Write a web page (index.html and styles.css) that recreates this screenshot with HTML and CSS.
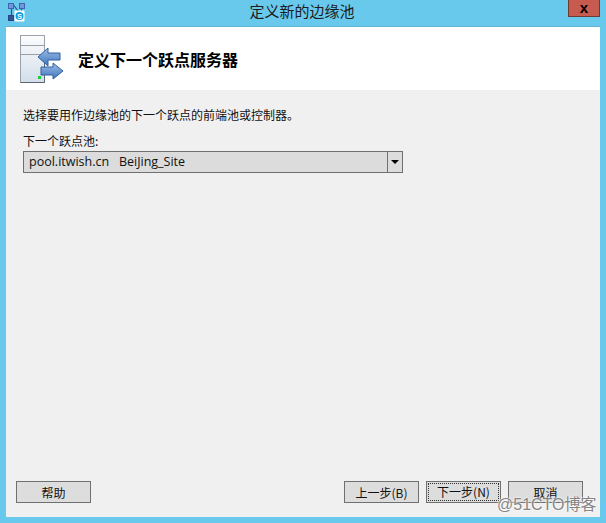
FILE: index.html
```html
<!DOCTYPE html>
<html lang="zh-CN">
<head>
  <meta charset="UTF-8" />
  <meta name="viewport" content="width=device-width, initial-scale=1.0"/>
  <title>定义新的边缘池</title>
  <link rel="stylesheet" href="styles.css">
</head>
<body>
  <div class="window">
    <div class="titlebar">
      <div class="app-icon">
        <svg width="17" height="19" viewBox="0 0 17 19">
          <path d="M3.5 4V14M13.5 4V9M6 2.5L10 8" stroke="#2f5597" stroke-width="1.2" fill="none"/>
          <rect x="0.5" y="0.5" width="5" height="5" fill="#6f97dc" stroke="#3d64ac"/>
          <rect x="11.5" y="0.5" width="5" height="5" fill="#6f97dc" stroke="#3d64ac"/>
          <rect x="0.5" y="12.5" width="5" height="5" fill="#2f5597" stroke="#27477f"/>
          <rect x="6.5" y="7.5" width="10" height="11" rx="1" fill="#ffffff"/>
          <circle cx="11.5" cy="13" r="4" fill="#10a0e0"/>
          <text x="11.5" y="15.6" class="skype-s">S</text>
        </svg>
      </div>
      <div class="title">定义新的边缘池</div>
      <div class="close-wrap"><div class="close">x</div></div>
    </div>

    <div class="dialog">
      <div class="header">
        <svg class="header-icon" width="46" height="50" viewBox="0 0 46 50">
          <defs>
            <linearGradient id="serverFill" x1="0" y1="0" x2="0" y2="1">
              <stop offset="0" stop-color="#fbfcfd"/>
              <stop offset="1" stop-color="#d3deea"/>
            </linearGradient>
            <linearGradient id="arrowFill" x1="0" y1="0" x2="0" y2="1">
              <stop offset="0" stop-color="#9dbde6"/>
              <stop offset="1" stop-color="#3f76bf"/>
            </linearGradient>
          </defs>
          <rect x="0.5" y="0.5" width="24" height="47" fill="url(#serverFill)" stroke="#9aa1a8"/>
          <path d="M1 10.5H24M1 19.5H24" stroke="#9aa1a8" fill="none"/>
          <path d="M0.5 47.5H24.5V20" stroke="#5d6670" fill="none"/>
          <rect x="18" y="41" width="3" height="3" fill="#1fce3c"/>
          <path d="M18 22L28 13V18H40V25H28V31Z" fill="url(#arrowFill)" stroke="#2f5f9f"/>
          <path d="M21 32H33V28L43 36L33 44V40H21Z" fill="url(#arrowFill)" stroke="#2f5f9f"/>
        </svg>
        <h1>定义下一个跃点服务器</h1>
      </div>

      <div class="content">
        <p class="intro">选择要用作边缘池的下一个跃点的前端池或控制器。</p>
        <label class="field-label">下一个跃点池:</label>
        <div class="combo">
          <span class="combo-value">pool.itwish.cn&nbsp;&nbsp;&nbsp;BeiJing_Site</span>
          <span class="combo-arrow"></span>
        </div>
      </div>

      <div class="footer">
        <button class="btn">帮助</button>
        <div class="btn-group">
          <button class="btn">上一步(B)</button>
          <button class="btn btn-focus"><span>下一步(N)</span></button>
          <button class="btn">取消</button>
        </div>
      </div>
    </div>
  </div>

  <div class="watermark">@51CTO博客</div>
</body>
</html>
```

FILE: styles.css
```css
html, body {
  margin: 0;
  padding: 0;
}

body {
  width: 606px;
  height: 523px;
  overflow: hidden;
  position: relative;
  background: #69c9ec;
  font-family: "Open Sans", "Noto Sans CJK SC", sans-serif;
  font-size: 12px;
  color: #111;
}

.window {
  height: 517px;
  padding: 0 6px;
  display: flex;
  flex-direction: column;
}

.titlebar {
  height: 26px;
  flex: none;
  display: grid;
  grid-template-columns: 1fr auto 1fr;
  border-bottom: 1px solid #62b3d2;
}

.app-icon {
  padding-top: 3px;
  margin-left: 2px;
}

.skype-s {
  font-family: "Liberation Sans", sans-serif;
  font-size: 7px;
  font-weight: bold;
  fill: #ffffff;
  text-anchor: middle;
}

.title {
  font-family: "Noto Sans CJK SC", sans-serif;
  font-size: 15px;
  line-height: 22px;
  margin-left: -2px;
  color: #1c1c1c;
}

.close-wrap {
  display: flex;
  justify-content: flex-end;
}

.close {
  width: 32px;
  height: 17px;
  box-sizing: border-box;
  background: #c75b50;
  border: 1px solid #6e3a33;
  border-top: none;
  color: #000;
  text-align: center;
  font-family: "Liberation Sans", sans-serif;
  font-size: 15px;
  font-weight: bold;
  line-height: 16px;
}

.dialog {
  flex: 1;
  display: flex;
  flex-direction: column;
  background: #f0f0f0;
}

.header {
  height: 63px;
  flex: none;
  box-sizing: border-box;
  background: #ffffff;
  display: flex;
  align-items: flex-start;
  padding: 8px 0 0 14px;
}

.header-icon {
  flex: none;
}

.header h1 {
  margin: 12px 0 0 12px;
  font-family: "Noto Sans CJK SC", sans-serif;
  font-size: 16px;
  line-height: 24px;
  font-weight: 700;
  color: #000;
}

.content {
  flex: 1;
  padding: 16px 17px 0;
}

.intro {
  margin: 0;
  font-family: "Noto Sans CJK SC", sans-serif;
  line-height: 18px;
}

.field-label {
  display: block;
  margin-top: 8px;
  font-family: "Noto Sans CJK SC", sans-serif;
  line-height: 18px;
}

.combo {
  width: 380px;
  height: 22px;
  margin-top: 1px;
  box-sizing: border-box;
  display: flex;
  align-items: center;
  background: #dcdcdc;
  border: 1px solid #707070;
}

.combo-value {
  flex: 1;
  padding-left: 5px;
  font-size: 12.5px;
  line-height: 20px;
}

.combo-arrow {
  flex: none;
  width: 15px;
  height: 20px;
  box-sizing: border-box;
  border-left: 1px solid #707070;
  display: flex;
  align-items: center;
  justify-content: center;
}

.combo-arrow::after {
  content: "";
  border-left: 4px solid transparent;
  border-right: 4px solid transparent;
  border-top: 4px solid #000;
}

.footer {
  display: flex;
  justify-content: space-between;
  padding: 0 17px 14px 10px;
}

.btn-group {
  display: flex;
  gap: 7px;
}

.btn {
  width: 75px;
  height: 22px;
  padding: 0;
  box-sizing: border-box;
  background: #dddddd;
  border: 1px solid #707070;
  font-family: "Noto Sans CJK SC", sans-serif;
  font-size: 12px;
  color: #111;
}

.btn-focus {
  padding: 1px;
}

.btn-focus span {
  display: block;
  height: 100%;
  box-sizing: border-box;
  border: 1px dotted #333;
  line-height: 16px;
}

.watermark {
  position: absolute;
  left: 497px;
  top: 495px;
  font-family: "Liberation Sans", "Noto Sans CJK SC", sans-serif;
  font-size: 16px;
  line-height: 20px;
  color: #858585;
  text-shadow: 0 0 2px #ffffff, 0 0 2px #ffffff;
  white-space: nowrap;
}
```
